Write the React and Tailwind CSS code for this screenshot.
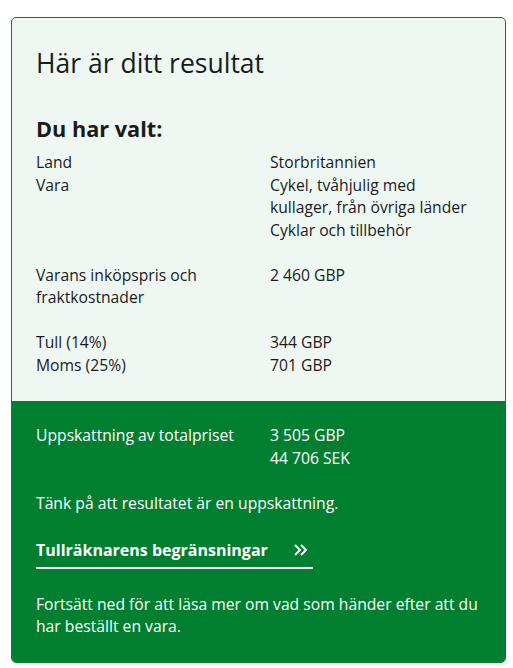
export default function App() {
  const font = { fontFamily: '"Open Sans", "Noto Sans", sans-serif' };

  return (
    <div className="min-h-screen bg-white pl-[11px] pt-[17px] text-[#1b1b1b]" style={font}>
      <div className="w-[495px] overflow-hidden rounded-[5px] border border-[#0b7a35] bg-[#eff7f3]">
        <div className="px-6 pt-[27px] pb-[25px] text-[15.7px] leading-[22.5px]">
          <h1 className="text-[26.5px] leading-[36px] font-normal">Här är ditt resultat</h1>
          <h2 className="mt-[34px] text-[21.7px] leading-[28px] font-bold">Du har valt:</h2>

          <div className="mt-[8px] grid grid-cols-[234px_1fr]">
            <div>Land</div>
            <div>Storbritannien</div>
            <div>Vara</div>
            <div>
              Cykel, tvåhjulig med
              <br />
              kullager, från övriga länder
              <br />
              Cyklar och tillbehör
            </div>
          </div>

          <div className="mt-[22.5px] grid grid-cols-[234px_1fr]">
            <div>
              Varans inköpspris och
              <br />
              fraktkostnader
            </div>
            <div>2 460 GBP</div>
          </div>

          <div className="mt-[22.5px] grid grid-cols-[234px_1fr]">
            <div>Tull (14%)</div>
            <div>344 GBP</div>
            <div>Moms (25%)</div>
            <div>701 GBP</div>
          </div>
        </div>

        <div className="bg-[#007f30] px-6 pt-[23px] pb-[24px] text-[15.7px] leading-[22.5px] text-white">
          <div className="grid grid-cols-[234px_1fr]">
            <div>Uppskattning av totalpriset</div>
            <div>
              3 505 GBP
              <br />
              44 706 SEK
            </div>
          </div>

          <p className="mt-[22.5px]">Tänk på att resultatet är en uppskattning.</p>

          <a
            href="#"
            className="mt-[25px] flex w-[277px] items-center border-b-2 border-white pb-[5px] text-[16px] font-bold"
          >
            <span>Tullräknarens begränsningar</span>
            <svg className="ml-[25px]" width="15" height="14" viewBox="0 0 15 14" fill="none">
              <path d="M2 2l5 5-5 5M8 2l5 5-5 5" stroke="white" strokeWidth="2" />
            </svg>
          </a>

          <p className="mt-[24px]">
            Fortsätt ned för att läsa mer om vad som händer efter att du
            <br />
            har beställt en vara.
          </p>
        </div>
      </div>
    </div>
  );
}
